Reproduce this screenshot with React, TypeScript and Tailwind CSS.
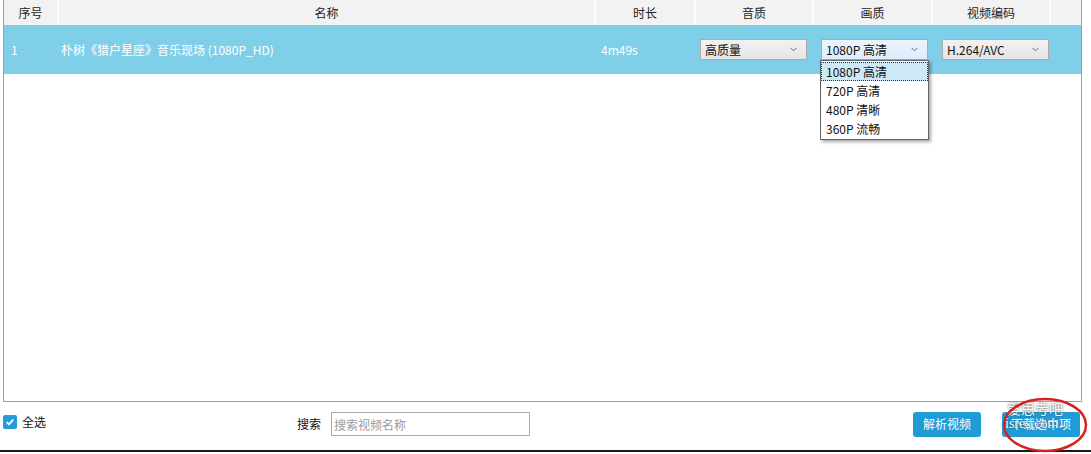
import { useState } from 'react';

const FONT = "font-['Microsoft_YaHei','Noto_Sans_CJK_SC','Noto_Sans',sans-serif]";

function Chevron() {
  return (
    <svg width="7" height="5" viewBox="0 0 7 5" className="shrink-0">
      <polyline points="0.5 0.8 3.5 3.8 6.5 0.8" fill="none" stroke="#6a6a6a" strokeWidth="1" />
    </svg>
  );
}

function FakeSelect({ value, active, className }: { value: string; active?: boolean; className?: string }) {
  return (
    <div
      className={`h-[21px] w-[107px] flex items-center justify-between pl-[4px] pr-[9px] border text-[12px] text-[#111] ${
        active
          ? 'border-[#7eb4ea] bg-gradient-to-b from-[#ecf4fc] to-[#dcecfc]'
          : 'border-[#acacac] bg-gradient-to-b from-[#f2f2f2] to-[#e5e5e5]'
      } ${className ?? ''}`}
    >
      <span>{value}</span>
      <Chevron />
    </div>
  );
}

const qualityOptions = ['1080P 高清', '720P 高清', '480P 清晰', '360P 流畅'];

export default function App() {
  const [checked, setChecked] = useState(true);

  return (
    <div className={`relative w-[1091px] h-[454px] bg-white overflow-hidden ${FONT}`}>
      {/* Table */}
      <div className="ml-[3px] w-[1079px] h-[402px] border-x border-b border-[#a0a0a0] flex flex-col">
        {/* Header */}
        <div className="h-[25px] flex bg-[#f2f2f2] text-[12px] text-[#222]">
          <div className="w-[55px] border-r-2 border-[#fbfbfb] flex items-center justify-center">序号</div>
          <div className="w-[537px] border-r-2 border-[#fbfbfb] flex items-center justify-center">名称</div>
          <div className="w-[100px] border-r-2 border-[#fbfbfb] flex items-center justify-center">时长</div>
          <div className="w-[118px] border-r-2 border-[#fbfbfb] flex items-center justify-center">音质</div>
          <div className="w-[119px] border-r-2 border-[#fbfbfb] flex items-center justify-center">画质</div>
          <div className="w-[118px] border-r-2 border-[#fbfbfb] flex items-center justify-center">视频编码</div>
          <div className="flex-1" />
        </div>

        {/* Row */}
        <div className="h-[49px] flex items-center bg-[#7fcfe9] text-[12px] text-white">
          <div className="w-[55px] pl-[7px]">1</div>
          <div className="w-[537px] pl-[2px]">朴树《猎户星座》音乐现场 (1080P_HD)</div>
          <div className="w-[100px] pl-[5px]">4m49s</div>
          <div className="w-[118px] pl-[4px]">
            <FakeSelect value="高质量" />
          </div>
          <div className="relative w-[119px] pl-[7px]">
            <FakeSelect value="1080P 高清" active />
            {/* Open dropdown */}
            <div className="absolute left-[6px] top-[21px] w-[109px] bg-white border border-[#646464] shadow-[2px_2px_3px_rgba(0,0,0,0.35)] py-[1px] z-10 text-[12px] text-[#111]">
              {qualityOptions.map((o, i) => (
                <div
                  key={o}
                  className={`h-[19px] flex items-center pl-[4px] ${
                    i === 0 ? 'bg-[#cde8f6] border border-dotted border-[#333]' : 'border border-transparent'
                  }`}
                >
                  {o}
                </div>
              ))}
            </div>
          </div>
          <div className="w-[118px] pl-[9px]">
            <FakeSelect value="H.264/AVC" />
          </div>
          <div className="flex-1" />
        </div>

        <div className="flex-1" />
      </div>

      {/* Footer */}
      <div className="h-[44px] flex items-center text-[12px] text-[#111]">
        <button
          onClick={() => setChecked(!checked)}
          className={`ml-[3px] w-[14px] h-[14px] rounded-[2px] flex items-center justify-center -mt-[4px] ${
            checked ? 'bg-[#239cd9]' : 'border border-[#888] bg-white'
          }`}
        >
          {checked && (
            <svg width="10" height="10" viewBox="0 0 10 10">
              <polyline points="1.8 5.2 4 7.4 8.3 2.6" fill="none" stroke="white" strokeWidth="1.8" />
            </svg>
          )}
        </button>
        <span className="ml-[5px] -mt-[4px]">全选</span>

        <span className="ml-[251px]">搜索</span>
        <input
          className="ml-[10px] w-[199px] h-[24px] border border-[#a9a9a9] px-[2px] text-[12px] outline-none placeholder:text-[#9a9a9a]"
          placeholder="搜索视频名称"
        />

        <button className="ml-auto w-[68px] h-[25px] rounded-[3px] bg-[#1f9bd6] text-white text-[12px]">解析视频</button>
        <button className="ml-[21px] mr-[11px] w-[78px] h-[25px] rounded-[3px] bg-[#1f9bd6] text-white text-[12px]">
          下载选中项
        </button>
      </div>

      <div className="mt-[4px] h-[2px] bg-[#1b1b1b]" />

      {/* Watermark */}
      <div className="absolute left-[1007px] top-[401px] leading-[15px] text-[14px] text-white [text-shadow:0_0_2px_#333] pointer-events-none">
        <div>爱思考吧</div>
        <div className="font-['Liberation_Serif',serif] -ml-[2px]">isres.com</div>
      </div>

      {/* Red annotation ellipse */}
      <svg className="absolute left-[1001px] top-[396px] pointer-events-none" width="90" height="58" viewBox="0 0 90 58">
        <ellipse cx="44" cy="29" rx="41" ry="26" fill="none" stroke="#d8211f" strokeWidth="2.5" />
      </svg>
    </div>
  );
}
